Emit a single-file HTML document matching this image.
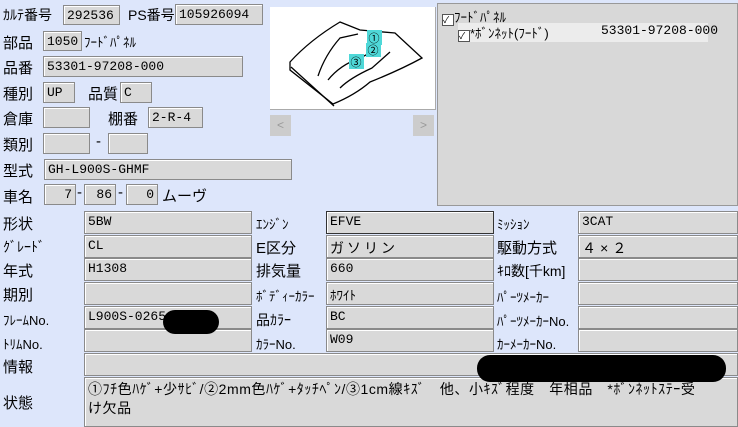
<html><head><style>
body{margin:0;width:738px;height:423px;background:#dde6fb;font-family:"Liberation Sans","Noto Sans CJK JP",sans-serif;position:relative;overflow:hidden;color:#000}
.a{position:absolute;white-space:nowrap}
.l{position:absolute;font-size:15px;white-space:nowrap}
.s{position:absolute;font-size:13px;white-space:nowrap}
.b{position:absolute;background:#d9d9d9;border:1px solid #8a8a8a;box-shadow:inset 1px 1px 0 #fff;box-sizing:border-box;font-family:"Liberation Mono","Noto Sans CJK JP",monospace;font-size:13px;padding:2px 3px;white-space:nowrap;overflow:hidden}
.r{text-align:right}
</style></head><body>
<div class="l" style="left:3px;top:5px;font-size:14px">ｶﾙﾃ番号</div>
<div class="b" style="left:63px;top:5px;width:57px;height:20px">292536</div>
<div class="l" style="left:128px;top:5px;font-size:14px">PS番号</div>
<div class="b" style="left:175px;top:4px;width:88px;height:21px">105926094</div>
<div class="l" style="left:3px;top:32px">部品</div>
<div class="b" style="left:43px;top:31px;width:39px;height:20px">1050</div>
<div class="s" style="left:84px;top:32px">ﾌｰﾄﾞﾊﾟﾈﾙ</div>
<div class="l" style="left:3px;top:57px">品番</div>
<div class="b" style="left:43px;top:56px;width:200px;height:21px">53301-97208-000</div>
<div class="l" style="left:3px;top:83px">種別</div>
<div class="b" style="left:43px;top:82px;width:32px;height:21px">UP</div>
<div class="l" style="left:88px;top:83px">品質</div>
<div class="b" style="left:120px;top:82px;width:32px;height:21px">C</div>
<div class="l" style="left:3px;top:108px">倉庫</div>
<div class="b" style="left:43px;top:107px;width:47px;height:21px"></div>
<div class="l" style="left:108px;top:108px">棚番</div>
<div class="b" style="left:148px;top:107px;width:55px;height:21px">2-R-4</div>
<div class="l" style="left:3px;top:134px">類別</div>
<div class="b" style="left:43px;top:133px;width:47px;height:21px"></div>
<div class="l" style="left:96px;top:133px">-</div>
<div class="b" style="left:108px;top:133px;width:40px;height:21px"></div>
<div class="l" style="left:3px;top:160px">型式</div>
<div class="b" style="left:44px;top:159px;width:248px;height:21px">GH-L900S-GHMF</div>
<div class="l" style="left:3px;top:186px">車名</div>
<div class="b r" style="left:44px;top:184px;width:32px;height:21px">7</div>
<div class="l" style="left:77px;top:184px">-</div>
<div class="b r" style="left:84px;top:184px;width:32px;height:21px">86</div>
<div class="l" style="left:118px;top:184px">-</div>
<div class="b r" style="left:126px;top:184px;width:32px;height:21px">0</div>
<div class="l" style="left:162px;top:185px">ムーヴ</div>

<div class="a" style="left:270px;top:7px;width:166px;height:103px;background:#fff;border-bottom:1px solid #aaa;border-right:1px solid #aaa;box-sizing:border-box">
<svg width="166" height="103" viewBox="270 7 166 103"><g fill="none" stroke="#000" stroke-width="1.3">
<path d="M290 62 Q310 40 340 22 L360 30 L395 33 L422 58 Q400 70 370 82 Q355 95 333 104 L290 70 Z"/>
<path d="M318 76 Q325 55 340 38 L358 34"/><path d="M328 80 Q340 65 360 58 L372 52"/><path d="M340 88 Q350 78 372 68 L390 52"/><path d="M291 67 L334 106"/></g>
<g fill="#4fd8d8"><rect x="367" y="30" width="15" height="15"/><rect x="366" y="43" width="15" height="14"/><rect x="349" y="54" width="15" height="15"/></g>
<g font-size="11" text-anchor="middle"><text x="374" y="42">①</text><text x="373" y="54">②</text><text x="356" y="66">③</text></g></svg></div>
<div class="a" style="left:270px;top:115px;width:21px;height:21px;background:#ccc;color:#999;font-size:12px;text-align:center;line-height:21px">&lt;</div>
<div class="a" style="left:413px;top:115px;width:21px;height:21px;background:#ccc;color:#999;font-size:12px;text-align:center;line-height:21px">&gt;</div>

<div class="a" style="left:437px;top:3px;width:301px;height:203px;background:#d8d8d8;border:1px solid #999;box-sizing:border-box">
<div class="s" style="left:4px;top:3px;font-size:13px"><span style="display:inline-block;width:10px;height:10px;border:1px solid #555;background:#fff;font-size:9px;line-height:10px;vertical-align:-1px">✓</span>ﾌｰﾄﾞﾊﾟﾈﾙ</div>
<div class="s" style="left:20px;top:19px;font-size:13px;background:#ececec;width:250px"><span style="display:inline-block;width:10px;height:10px;border:1px solid #555;background:#fff;font-size:9px;line-height:10px;vertical-align:-1px">✓</span>*ﾎﾞﾝﾈｯﾄ(ﾌｰﾄﾞ)<span style="position:absolute;left:143px;font-family:'Liberation Mono',monospace;font-size:13px">53301-97208-000</span></div>
</div>

<div class="l" style="left:3px;top:213px">形状</div>
<div class="l" style="left:3px;top:237px;font-size:14px">ｸﾞﾚｰﾄﾞ</div>
<div class="l" style="left:3px;top:260px">年式</div>
<div class="l" style="left:3px;top:284px">期別</div>
<div class="l" style="left:3px;top:310px;font-size:13px">ﾌﾚｰﾑNo.</div>
<div class="l" style="left:3px;top:334px;font-size:13px">ﾄﾘﾑNo.</div>
<div class="l" style="left:3px;top:356px">情報</div>
<div class="l" style="left:3px;top:392px">状態</div>
<div class="b" style="left:84px;top:211px;width:168px;height:23px">5BW</div>
<div class="b" style="left:84px;top:235px;width:168px;height:23px">CL</div>
<div class="b" style="left:84px;top:258px;width:168px;height:23px">H1308</div>
<div class="b" style="left:84px;top:282px;width:168px;height:23px"></div>
<div class="b" style="left:84px;top:306px;width:168px;height:23px">L900S-0265</div>
<div class="b" style="left:84px;top:329px;width:168px;height:23px"></div>
<div class="s" style="left:256px;top:214px">ｴﾝｼﾞﾝ</div>
<div class="l" style="left:256px;top:237px">E区分</div>
<div class="l" style="left:256px;top:260px">排気量</div>
<div class="s" style="left:256px;top:286px">ﾎﾞﾃﾞｨｰｶﾗｰ</div>
<div class="l" style="left:256px;top:310px;font-size:14px">品ｶﾗｰ</div>
<div class="s" style="left:256px;top:334px">ｶﾗｰNo.</div>
<div class="b" style="left:326px;top:211px;width:168px;height:23px;border-color:#333">EFVE</div>
<div class="b" style="left:326px;top:235px;width:168px;height:23px;font-size:14px;letter-spacing:3px">ガソリン</div>
<div class="b" style="left:326px;top:258px;width:168px;height:23px">660</div>
<div class="b" style="left:326px;top:282px;width:168px;height:23px;font-size:13px">ﾎﾜｲﾄ</div>
<div class="b" style="left:326px;top:306px;width:168px;height:23px">BC</div>
<div class="b" style="left:326px;top:329px;width:168px;height:23px">W09</div>
<div class="s" style="left:497px;top:214px">ﾐｯｼｮﾝ</div>
<div class="l" style="left:497px;top:237px">駆動方式</div>
<div class="l" style="left:497px;top:261px;font-size:14px">ｷﾛ数[千km]</div>
<div class="s" style="left:497px;top:287px">ﾊﾟｰﾂﾒｰｶｰ</div>
<div class="s" style="left:497px;top:311px">ﾊﾟｰﾂﾒｰｶｰNo.</div>
<div class="s" style="left:497px;top:334px">ｶｰﾒｰｶｰNo.</div>
<div class="b" style="left:578px;top:211px;width:160px;height:23px">3CAT</div>
<div class="b" style="left:578px;top:235px;width:160px;height:23px;font-size:14px;letter-spacing:4px">４×２</div>
<div class="b" style="left:578px;top:258px;width:160px;height:23px"></div>
<div class="b" style="left:578px;top:282px;width:160px;height:23px"></div>
<div class="b" style="left:578px;top:306px;width:160px;height:23px"></div>
<div class="b" style="left:578px;top:329px;width:160px;height:23px"></div>
<div class="b" style="left:84px;top:353px;width:654px;height:23px"></div>
<div class="b" style="left:84px;top:377px;width:654px;height:50px;font-family:'Liberation Sans','Noto Sans CJK JP',sans-serif;font-size:14px;line-height:19px;padding:2px 3px;letter-spacing:0.55px">①ﾌﾁ色ﾊｹﾞ+少ｻﾋﾞ/②2mm色ﾊｹﾞ+ﾀｯﾁﾍﾟﾝ/③1cm線ｷｽﾞ　他、小ｷｽﾞ程度　年相品　*ﾎﾞﾝﾈｯﾄｽﾃｰ受<br>け欠品</div>
<div class="a" style="left:163px;top:310px;width:56px;height:24px;background:#000;border-radius:12px"></div>
<div class="a" style="left:477px;top:355px;width:249px;height:27px;background:#000;border-radius:13px"></div>
</body></html>
